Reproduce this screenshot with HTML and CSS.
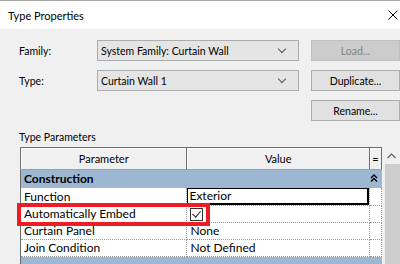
FILE: index.html
```html
<!DOCTYPE html>
<html lang="en">
<head>
    <meta charset="UTF-8">
    <title>Type Properties</title>
    <link rel="stylesheet" href="styles.css">
</head>
<body>
    <div class="titlebar">
        <span>Type Properties</span>
        <svg class="close" width="10" height="10" viewBox="0 0 10 10">
            <path d="M0.5 0.5 L9.5 9.5 M9.5 0.5 L0.5 9.5" stroke="#000" stroke-width="1" fill="none"/>
        </svg>
    </div>

    <div class="content">
        <div class="fields">
            <label>Family:</label>
            <div class="combo">System Family: Curtain Wall<span class="caret"></span></div>
            <button class="btn" disabled>Load...</button>

            <label>Type:</label>
            <div class="combo">Curtain Wall 1<span class="caret"></span></div>
            <button class="btn">Duplicate...</button>

            <button class="btn rename">Rename...</button>
        </div>

        <div class="section-label">Type Parameters</div>

        <div class="grid-wrap">
            <table class="params">
                <colgroup>
                    <col class="c-name">
                    <col class="c-value">
                    <col class="c-eq">
                </colgroup>
                <thead>
                    <tr>
                        <th>Parameter</th>
                        <th>Value</th>
                        <th>=</th>
                    </tr>
                </thead>
                <tbody>
                    <tr class="group">
                        <td colspan="3">
                            Construction
                            <svg class="collapse" width="8" height="8" viewBox="0 0 8 8">
                                <path d="M1 4 L4 1 L7 4 M1 7.5 L4 4.5 L7 7.5" stroke="#000" stroke-width="1.3" fill="none"/>
                            </svg>
                        </td>
                    </tr>
                    <tr>
                        <td>Function</td>
                        <td class="editing"><div class="edit-box">Exterior</div></td>
                        <td></td>
                    </tr>
                    <tr>
                        <td>Automatically Embed</td>
                        <td><span class="check"></span></td>
                        <td></td>
                    </tr>
                    <tr>
                        <td>Curtain Panel</td>
                        <td>None</td>
                        <td></td>
                    </tr>
                    <tr>
                        <td>Join Condition</td>
                        <td>Not Defined</td>
                        <td></td>
                    </tr>
                    <tr class="group">
                        <td colspan="3">&nbsp;</td>
                    </tr>
                </tbody>
            </table>
            <div class="highlight"></div>
            <div class="scrollbar">
                <div class="arrow">
                    <svg width="9" height="6" viewBox="0 0 9 6">
                        <path d="M0.5 5 L4.5 1 L8.5 5" stroke="#606060" stroke-width="1.2" fill="none"/>
                    </svg>
                </div>
                <div class="thumb"></div>
            </div>
        </div>
    </div>
</body>
</html>
```

FILE: styles.css
```css
body {
    margin: 0;
    width: 400px;
    height: 264px;
    overflow: hidden;
    background-color: #f0f0f0;
    font-family: Lato, sans-serif;
    font-size: 10.5px;
    color: #000;
}
.titlebar {
    height: 28px;
    border-top: 1px solid #a5a5a5;
    background-color: #fff;
    display: flex;
    align-items: center;
    justify-content: space-between;
    padding: 0 2px 0 8px;
    font-size: 11px;
}
.content {
    padding: 11px 0 0 19px;
}
.fields {
    display: grid;
    grid-template-columns: 66px 202px 89px;
    grid-auto-rows: 21px;
    column-gap: 12px;
    row-gap: 9px;
    align-items: center;
}
.combo {
    height: 19px;
    border: 1px solid #adadad;
    background-color: #e5e5e5;
    display: flex;
    align-items: center;
    padding-left: 3px;
    position: relative;
}
.caret {
    position: absolute;
    right: 13px;
    top: 5px;
    width: 5px;
    height: 5px;
    border-right: 1px solid #555;
    border-bottom: 1px solid #555;
    transform: rotate(45deg);
}
.btn {
    height: 21px;
    border: 1px solid #adadad;
    background-color: #e1e1e1;
    font-family: inherit;
    font-size: 10.5px;
    padding: 0;
    color: #000;
}
.btn:disabled {
    background-color: #cccccc;
    border-color: #bfbfbf;
    color: #838383;
}
.rename {
    grid-column: 3;
}
.section-label {
    margin-top: 7px;
    height: 19px;
    line-height: 19px;
}
.grid-wrap {
    position: relative;
    display: flex;
    margin-left: 1px;
}
.params {
    width: 362px;
    table-layout: fixed;
    border-collapse: collapse;
    border-left: 1px solid #6d6d6d;
    border-top: 1px solid #6d6d6d;
    background-color: #fff;
    font-size: 12px;
}
.c-name { width: 166px; }
.c-value { width: 182px; }
.c-eq { width: 12px; }
.params th {
    height: 21px;
    font-weight: normal;
    font-size: 11px;
    background-color: #f0f0f0;
    border-right: 1px solid #6d6d6d;
    border-bottom: 1px solid #a0a0a0;
    box-shadow: inset 1px 1px 0 #fff;
    padding: 0;
}
.params td {
    height: 16px;
    padding: 0 0 0 3px;
    border-bottom: 1px dotted #9a9a9a;
    border-right: 1px dotted #9a9a9a;
    white-space: nowrap;
    overflow: hidden;
    line-height: 16px;
}
.params .group td {
    height: 18px;
    background-color: #9db7d3;
    font-weight: bold;
    border: none;
    position: relative;
}
.collapse {
    position: absolute;
    right: 4px;
    top: 4px;
}
.params td.editing {
    padding: 0;
}
.edit-box {
    height: 14px;
    line-height: 14px;
    border: 1px solid #000;
    border-right-width: 2px;
    border-bottom-width: 2px;
    padding-left: 1px;
}
.check {
    display: inline-block;
    width: 11px;
    height: 11px;
    border: 1px solid #333;
    margin-top: 2px;
    vertical-align: top;
    position: relative;
}
.check::after {
    content: "";
    position: absolute;
    left: 3px;
    top: 0;
    width: 4px;
    height: 7px;
    border-right: 1px solid #222;
    border-bottom: 1px solid #222;
    transform: rotate(40deg);
}
.highlight {
    position: absolute;
    left: -3px;
    top: 56px;
    width: 185px;
    height: 15px;
    border: 4px solid #ee1c25;
}
.scrollbar {
    width: 17px;
    margin-left: 1px;
    display: flex;
    flex-direction: column;
    background-color: #f0f0f0;
}
.arrow {
    height: 17px;
    display: flex;
    align-items: center;
    justify-content: center;
}
.thumb {
    flex: 1;
    height: 120px;
    margin-left: 2px;
    background-color: #cdcdcd;
}
```
